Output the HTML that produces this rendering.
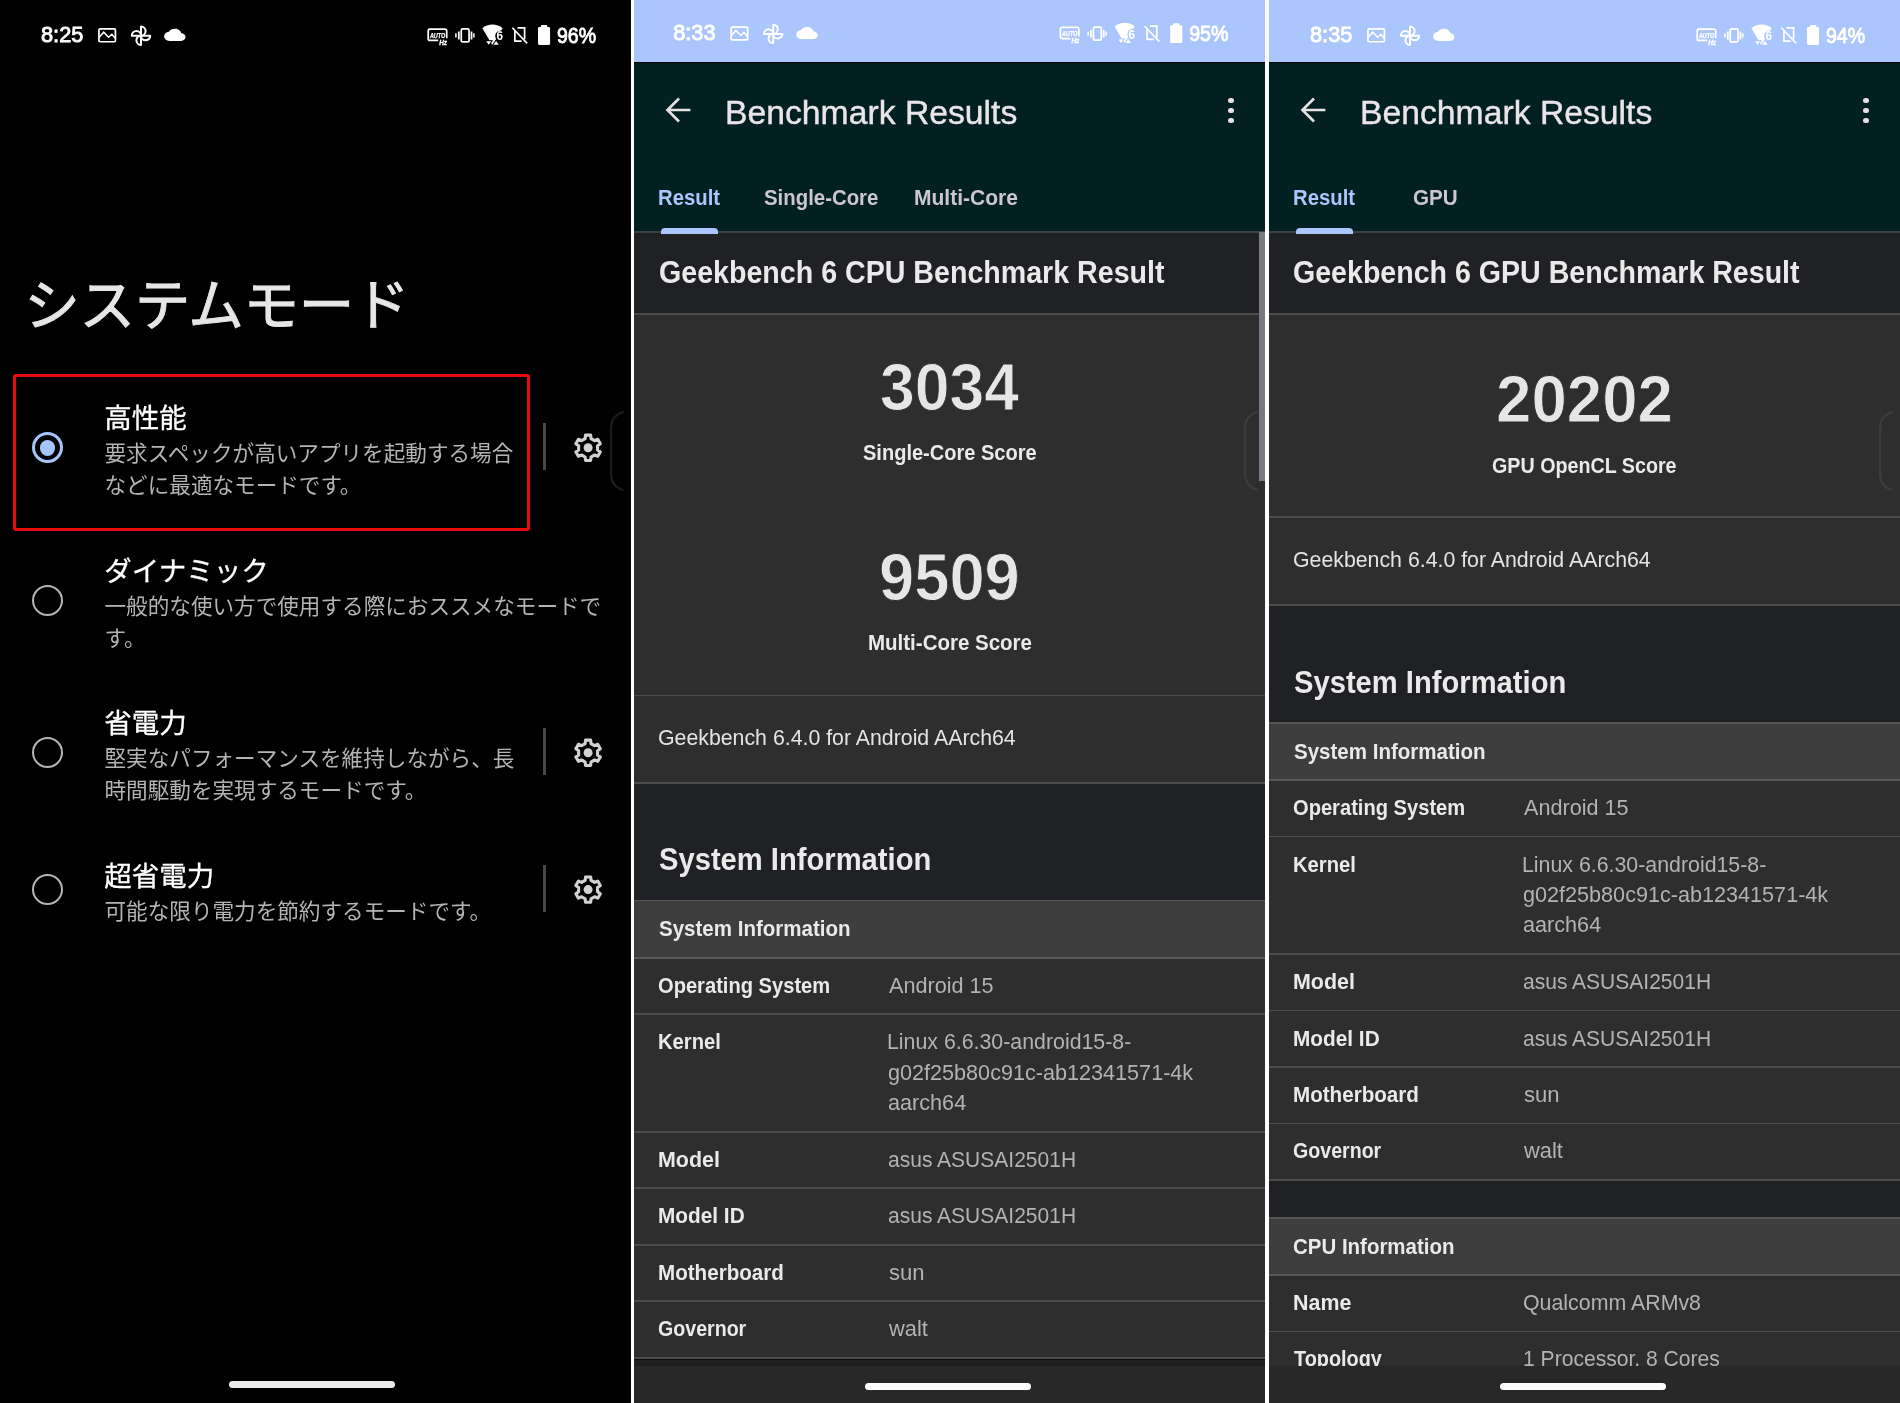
<!DOCTYPE html>
<html lang="ja"><head><meta charset="utf-8"><title>System mode / Geekbench 6</title>
<style>
html,body{margin:0;padding:0;background:#fff}
body{width:1900px;height:1403px;position:relative;overflow:hidden;font-family:"Liberation Sans","Noto Sans CJK JP",sans-serif}
.p{position:absolute;top:0;height:1403px;width:631px;overflow:hidden}
#p1{left:0;background:#000}
#p2{left:634px;background:#202124}
#p3{left:1269px;background:#202124}
.t{position:absolute;white-space:nowrap;line-height:1;transform-origin:0 50%}
.b{position:absolute}
.tl{position:absolute;left:0;top:0;width:631px;overflow:hidden;will-change:transform}
.ic{position:absolute;left:0;top:0;overflow:visible}
.sb{position:absolute;left:0;top:0;width:631px;height:62px}
#p2 .cut,#p3 .cut{fill:#abc6fd}
#p2 .cuts,#p3 .cuts{stroke:#abc6fd}
</style></head>
<body>
<div class="p" id="p1"><div class="b" style="left:12.7px;top:373.7px;width:517.8px;height:157.2px;box-sizing:border-box;border:3.6px solid #e80c0c;border-radius:3px;background:transparent"></div><div class="b" style="left:31.8px;top:431.9px;width:31.6px;height:31.6px;box-sizing:border-box;border:3.7px solid #a5c4f8;border-radius:50%"></div><div class="b" style="left:39.7px;top:439.8px;width:15.8px;height:15.8px;background:#a5c4f8;border-radius:50%"></div><div class="b" style="left:543.1px;top:423.4px;width:2.6px;height:47px;background:#484848;"></div><svg class="ic" width="631" height="1403" viewBox="0 0 631 1403"><path fill="none" stroke="#d2d2d2" stroke-width="3.1" stroke-linejoin="round" d="M585.18 438.55 L585.53 435.16 L590.67 435.16 L591.02 438.55 L594.65 440.65 L597.76 439.25 L600.33 443.71 L597.57 445.70 L597.57 449.90 L600.33 451.89 L597.76 456.35 L594.65 454.95 L591.02 457.05 L590.67 460.44 L585.53 460.44 L585.18 457.05 L581.55 454.95 L578.44 456.35 L575.87 451.89 L578.63 449.90 L578.63 445.70 L575.87 443.71 L578.44 439.25 L581.55 440.65 Z"/><circle cx="588.1" cy="447.8" r="4.5" fill="#d2d2d2"/></svg><div class="b" style="left:31.8px;top:584.6000000000001px;width:31.6px;height:31.6px;box-sizing:border-box;border:2px solid #b4b4b4;border-radius:50%"></div><div class="b" style="left:31.8px;top:736.9000000000001px;width:31.6px;height:31.6px;box-sizing:border-box;border:2px solid #b4b4b4;border-radius:50%"></div><div class="b" style="left:543.1px;top:728.4000000000001px;width:2.6px;height:47px;background:#484848;"></div><svg class="ic" width="631" height="1403" viewBox="0 0 631 1403"><path fill="none" stroke="#d2d2d2" stroke-width="3.1" stroke-linejoin="round" d="M585.18 743.55 L585.53 740.16 L590.67 740.16 L591.02 743.55 L594.65 745.65 L597.76 744.25 L600.33 748.71 L597.57 750.70 L597.57 754.90 L600.33 756.89 L597.76 761.35 L594.65 759.95 L591.02 762.05 L590.67 765.44 L585.53 765.44 L585.18 762.05 L581.55 759.95 L578.44 761.35 L575.87 756.89 L578.63 754.90 L578.63 750.70 L575.87 748.71 L578.44 744.25 L581.55 745.65 Z"/><circle cx="588.1" cy="752.8000000000001" r="4.5" fill="#d2d2d2"/></svg><div class="b" style="left:31.8px;top:873.7px;width:31.6px;height:31.6px;box-sizing:border-box;border:2px solid #b4b4b4;border-radius:50%"></div><div class="b" style="left:543.1px;top:865.2px;width:2.6px;height:47px;background:#484848;"></div><svg class="ic" width="631" height="1403" viewBox="0 0 631 1403"><path fill="none" stroke="#d2d2d2" stroke-width="3.1" stroke-linejoin="round" d="M585.18 880.35 L585.53 876.96 L590.67 876.96 L591.02 880.35 L594.65 882.45 L597.76 881.05 L600.33 885.51 L597.57 887.50 L597.57 891.70 L600.33 893.69 L597.76 898.15 L594.65 896.75 L591.02 898.85 L590.67 902.24 L585.53 902.24 L585.18 898.85 L581.55 896.75 L578.44 898.15 L575.87 893.69 L578.63 891.70 L578.63 887.50 L575.87 885.51 L578.44 881.05 L581.55 882.45 Z"/><circle cx="588.1" cy="889.6" r="4.5" fill="#d2d2d2"/></svg><svg class="ic" width="631" height="1403" viewBox="0 0 631 1403"><path fill="none" stroke="#1b1b1b" stroke-width="2.4" stroke-linecap="round" d="M622.6 412 C 612.7 416.5, 611 421, 611 431 V 471 C 611 481, 612.7 485.5, 622.6 490"/></svg><div class="b" style="left:229px;top:1381px;width:166px;height:7px;border-radius:4px;background:#e9e9e9"></div><div class="tl" style="height:1403px"><div class="sb" style="transform:translate(0px,0px)"><span class="t" style="left:41.35px;top:24.27px;font-size:22.6px;color:#fff;transform:scaleX(0.9638506352943299);-webkit-text-stroke:0.9px #fff;">8:25</span><span class="t" style="left:556.87px;top:24.77px;font-size:22.6px;color:#fff;transform:scaleX(0.8648534515750157);-webkit-text-stroke:0.9px #fff;">96%</span><svg class="ic" width="631" height="62" viewBox="0 0 631 62" fill="none" stroke="#fff" stroke-width="1.7">
<rect x="98.95" y="28.95" width="16.5" height="12.8" rx="1.2"/>
<path d="M99.2 37.3 L103.7 32.2 L108.6 37.2 L111.8 34.3 L115.3 38.2" stroke-width="1.5" stroke-linejoin="miter"/>
<g stroke-width="2" stroke-linejoin="round">
<path d="M141 35.7 V26.5 A4.6 4.6 0 0 1 141 35.7 Z"/>
<path d="M141 35.7 H150.2 A4.6 4.6 0 0 1 141 35.7 Z"/>
<path d="M141 35.7 V44.9 A4.6 4.6 0 0 1 141 35.7 Z"/>
<path d="M141 35.7 H131.8 A4.6 4.6 0 0 1 141 35.7 Z"/>
</g>
<path fill="#fff" stroke="none" transform="translate(164.1 25.65) scale(0.8917 0.7625)" d="M19.35 10.04C18.67 6.59 15.64 4 12 4 9.11 4 6.6 5.64 5.35 8.04 2.34 8.36 0 10.91 0 14c0 3.310 2.69 6 6 6h13c2.76 0 5-2.24 5-5 0-2.64-2.050-4.78-4.65-4.960z"/>
<path d="M438.3 40.45 H430 A1.8 1.8 0 0 1 428.2 38.65 V30.95 A1.8 1.8 0 0 1 430 29.15 H444.9 A1.8 1.8 0 0 1 446.7 30.95 V38.2"/>
<text x="429.9" y="37.7" font-family="Liberation Sans, sans-serif" font-weight="700" font-style="italic" font-size="7.2" fill="#fff" stroke="#fff" stroke-width="0.25" textLength="15.4" lengthAdjust="spacingAndGlyphs">AUTO</text>
<text x="439.2" y="44.8" font-family="Liberation Sans, sans-serif" font-weight="700" font-style="italic" font-size="6.4" fill="#fff" stroke="#fff" stroke-width="0.3" textLength="7.8" lengthAdjust="spacingAndGlyphs">Hz</text>
<rect x="461.25" y="28.85" width="7.8" height="13.1" rx="1.4"/>
<path d="M458.8 31.6 V39.4 M471.5 31.6 V39.4" stroke-width="1.8"/>
<path d="M455.9 33.3 V37.6 M473.9 33.3 V37.6" stroke-width="1.5"/>
<path fill="#fff" stroke="none" d="M492.5 45.6 L482.4 28.3 A 15.6 15.6 0 0 1 502.6 28.3 Z"/>
<circle cx="500.9" cy="36.1" r="5.7" fill="#000" stroke="none" class="cut"/>
<path class="cuts" fill="#fff" stroke="#000" stroke-width="2" paint-order="stroke" stroke-linejoin="miter" d="M486.2 41.2 H491.2 L488.7 44.7 Z M493.4 44.7 H498.8 L496.1 40.9 Z"/>
<text x="496.4" y="40.4" font-family="Liberation Sans, sans-serif" font-weight="700" font-size="12.2" fill="#fff" stroke="none" textLength="6.5" lengthAdjust="spacingAndGlyphs">6</text>
<path d="M517.6 27.9 H524.6 V39.2 M521.6 41.2 H514.9 V31" stroke-width="1.7"/>
<path d="M512.3 27.8 L527.2 43.4" stroke-width="1.6"/>
<path fill="#fff" stroke="none" d="M539.3 27.1 H540.9 V25.9 A0.9 0.9 0 0 1 541.8 25 H546.4 A0.9 0.9 0 0 1 547.3 25.9 V27.1 H548.8 A1.3 1.3 0 0 1 550.1 28.4 V43.6 A1.3 1.3 0 0 1 548.8 44.9 H539.3 A1.3 1.3 0 0 1 538 43.6 V28.4 A1.3 1.3 0 0 1 539.3 27.1 Z"/>
</svg></div><span class="t" style="left:24.30px;top:279.13px;font-size:55.6px;color:#e6e6e6;letter-spacing:-0.35px;-webkit-text-stroke:0.9px #e6e6e6;">システムモード</span><span class="t" style="left:104.30px;top:405.22px;font-size:27.5px;color:#fff;-webkit-text-stroke:0.3px #fff;">高性能</span><span class="t" style="left:104.50px;top:443.07px;font-size:21.6px;color:#b4b4b4;">要求スペックが高いアプリを起動する場合</span><span class="t" style="left:104.50px;top:475.07px;font-size:21.6px;color:#b4b4b4;">などに最適なモードです。</span><span class="t" style="left:104.30px;top:557.92px;font-size:27.5px;color:#fff;-webkit-text-stroke:0.3px #fff;">ダイナミック</span><span class="t" style="left:104.50px;top:595.77px;font-size:21.6px;color:#b4b4b4;">一般的な使い方で使用する際におススメなモードで</span><span class="t" style="left:104.50px;top:627.77px;font-size:21.6px;color:#b4b4b4;">す。</span><span class="t" style="left:104.30px;top:710.22px;font-size:27.5px;color:#fff;-webkit-text-stroke:0.3px #fff;">省電力</span><span class="t" style="left:104.50px;top:748.07px;font-size:21.6px;color:#b4b4b4;">堅実なパフォーマンスを維持しながら、長</span><span class="t" style="left:104.50px;top:780.07px;font-size:21.6px;color:#b4b4b4;">時間駆動を実現するモードです。</span><span class="t" style="left:104.30px;top:862.72px;font-size:27.5px;color:#fff;-webkit-text-stroke:0.3px #fff;">超省電力</span><span class="t" style="left:104.50px;top:900.57px;font-size:21.6px;color:#b4b4b4;">可能な限り電力を節約するモードです。</span></div></div>
<div class="p" id="p2"><div class="b" style="left:0px;top:0px;width:631px;height:62px;background:#abc6fd;"></div><div class="b" style="left:0px;top:62px;width:631px;height:170px;background:#022021;"></div><div class="b" style="left:0px;top:61.8px;width:631px;height:1.1px;background:#00060f;"></div><svg class="ic" style="left:27px;top:92px" width="36" height="36" viewBox="0 0 24 24"><path fill="none" stroke="#e6e1e5" stroke-width="1.75" d="M19.6 12 H4.7 M12 4.3 L4.3 12 L12 19.7"/></svg><div class="b" style="left:594px;top:97.7px;width:5.6px;height:5.6px;border-radius:50%;background:#e6e1e5"></div><div class="b" style="left:594px;top:107.7px;width:5.6px;height:5.6px;border-radius:50%;background:#e6e1e5"></div><div class="b" style="left:594px;top:117.7px;width:5.6px;height:5.6px;border-radius:50%;background:#e6e1e5"></div><div class="b" style="left:0px;top:231px;width:631px;height:2px;background:#3a4244;"></div><div class="b" style="left:27px;top:228px;width:56.5px;height:6px;border-radius:4px 4px 0 0;background:#abc6fd"></div><div class="b" style="left:0px;top:314px;width:631px;height:468.8px;background:#2e2e2e;"></div><div class="b" style="left:0px;top:313.1px;width:631px;height:1.8px;background:#4c4c4c;"></div><svg class="ic" width="631" height="1403" viewBox="0 0 631 1403"><path fill="none" stroke="#3c3c3c" stroke-width="2.4" stroke-linecap="round" d="M622.6 412 C 612.7 416.5, 611 421, 611 431 V 471 C 611 481, 612.7 485.5, 622.6 490"/></svg><div class="b" style="left:0px;top:694.6px;width:631px;height:1.8px;background:#4c4c4c;"></div><div class="b" style="left:0px;top:781.9px;width:631px;height:1.8px;background:#4c4c4c;"></div><div class="b" style="left:0px;top:957.7px;width:631px;height:401px;background:#2e2e2e;"></div><div class="b" style="left:0px;top:900.5px;width:631px;height:57.2px;background:#3e3e3e;"></div><div class="b" style="left:0px;top:899.6px;width:631px;height:1.8px;background:#555;"></div><div class="b" style="left:0px;top:956.8px;width:631px;height:1.8px;background:#585858;"></div><div class="b" style="left:0px;top:1013.4px;width:631px;height:1.8px;background:#4c4c4c;"></div><div class="b" style="left:0px;top:1131.1px;width:631px;height:1.8px;background:#4c4c4c;"></div><div class="b" style="left:0px;top:1187.4px;width:631px;height:1.8px;background:#4c4c4c;"></div><div class="b" style="left:0px;top:1243.9px;width:631px;height:1.8px;background:#4c4c4c;"></div><div class="b" style="left:0px;top:1300.3px;width:631px;height:1.8px;background:#4c4c4c;"></div><div class="b" style="left:0px;top:1356.8px;width:631px;height:1.8px;background:#4c4c4c;"></div><div class="b" style="left:0px;top:1358.6000000000001px;width:631px;height:10px;background:#1f1f22;"></div><div class="b" style="left:0px;top:1358.6000000000001px;width:631px;height:1.2px;background:#0c0c12;"></div><div class="b" style="left:0px;top:1365.7px;width:631px;height:38px;background:#282828;"></div><div class="b" style="left:624.5px;top:232px;width:6.5px;height:249px;background:#7b7980;"></div><div class="b" style="left:231px;top:1383px;width:166px;height:7px;border-radius:4px;background:#fff"></div><div class="tl" style="height:1366.2px"><span class="t" style="left:90.86px;top:95.22px;font-size:34px;color:#e9e5ea;transform:scaleX(0.9915645179016103);-webkit-text-stroke:0.4px #e9e5ea;">Benchmark Results</span><span class="t" style="left:24.03px;top:186.63px;font-size:21.7px;color:#abc6fd;font-weight:700;transform:scaleX(0.9359152633865285);">Result</span><span class="t" style="left:129.68px;top:186.63px;font-size:21.7px;color:#cbc6d2;font-weight:700;transform:scaleX(0.9396430489868617);">Single-Core</span><span class="t" style="left:280.39px;top:186.63px;font-size:21.7px;color:#cbc6d2;font-weight:700;transform:scaleX(0.9688298378061814);">Multi-Core</span><div class="sb" style="transform:translate(-1.8px,-1.8px)"><span class="t" style="left:41.35px;top:24.27px;font-size:22.6px;color:#fff;transform:scaleX(0.9638506352943299);-webkit-text-stroke:0.9px #fff;">8:33</span><span class="t" style="left:556.87px;top:24.77px;font-size:22.6px;color:#fff;transform:scaleX(0.8648534515750157);-webkit-text-stroke:0.9px #fff;">95%</span><svg class="ic" width="631" height="62" viewBox="0 0 631 62" fill="none" stroke="#fff" stroke-width="1.7">
<rect x="98.95" y="28.95" width="16.5" height="12.8" rx="1.2"/>
<path d="M99.2 37.3 L103.7 32.2 L108.6 37.2 L111.8 34.3 L115.3 38.2" stroke-width="1.5" stroke-linejoin="miter"/>
<g stroke-width="2" stroke-linejoin="round">
<path d="M141 35.7 V26.5 A4.6 4.6 0 0 1 141 35.7 Z"/>
<path d="M141 35.7 H150.2 A4.6 4.6 0 0 1 141 35.7 Z"/>
<path d="M141 35.7 V44.9 A4.6 4.6 0 0 1 141 35.7 Z"/>
<path d="M141 35.7 H131.8 A4.6 4.6 0 0 1 141 35.7 Z"/>
</g>
<path fill="#fff" stroke="none" transform="translate(164.1 25.65) scale(0.8917 0.7625)" d="M19.35 10.04C18.67 6.59 15.64 4 12 4 9.11 4 6.6 5.64 5.35 8.04 2.34 8.36 0 10.91 0 14c0 3.310 2.69 6 6 6h13c2.76 0 5-2.24 5-5 0-2.64-2.050-4.78-4.65-4.960z"/>
<path d="M438.3 40.45 H430 A1.8 1.8 0 0 1 428.2 38.65 V30.95 A1.8 1.8 0 0 1 430 29.15 H444.9 A1.8 1.8 0 0 1 446.7 30.95 V38.2"/>
<text x="429.9" y="37.7" font-family="Liberation Sans, sans-serif" font-weight="700" font-style="italic" font-size="7.2" fill="#fff" stroke="#fff" stroke-width="0.25" textLength="15.4" lengthAdjust="spacingAndGlyphs">AUTO</text>
<text x="439.2" y="44.8" font-family="Liberation Sans, sans-serif" font-weight="700" font-style="italic" font-size="6.4" fill="#fff" stroke="#fff" stroke-width="0.3" textLength="7.8" lengthAdjust="spacingAndGlyphs">Hz</text>
<rect x="461.25" y="28.85" width="7.8" height="13.1" rx="1.4"/>
<path d="M458.8 31.6 V39.4 M471.5 31.6 V39.4" stroke-width="1.8"/>
<path d="M455.9 33.3 V37.6 M473.9 33.3 V37.6" stroke-width="1.5"/>
<path fill="#fff" stroke="none" d="M492.5 45.6 L482.4 28.3 A 15.6 15.6 0 0 1 502.6 28.3 Z"/>
<circle cx="500.9" cy="36.1" r="5.7" fill="#000" stroke="none" class="cut"/>
<path class="cuts" fill="#fff" stroke="#000" stroke-width="2" paint-order="stroke" stroke-linejoin="miter" d="M486.2 41.2 H491.2 L488.7 44.7 Z M493.4 44.7 H498.8 L496.1 40.9 Z"/>
<text x="496.4" y="40.4" font-family="Liberation Sans, sans-serif" font-weight="700" font-size="12.2" fill="#fff" stroke="none" textLength="6.5" lengthAdjust="spacingAndGlyphs">6</text>
<path d="M517.6 27.9 H524.6 V39.2 M521.6 41.2 H514.9 V31" stroke-width="1.7"/>
<path d="M512.3 27.8 L527.2 43.4" stroke-width="1.6"/>
<path fill="#fff" stroke="none" d="M539.3 27.1 H540.9 V25.9 A0.9 0.9 0 0 1 541.8 25 H546.4 A0.9 0.9 0 0 1 547.3 25.9 V27.1 H548.8 A1.3 1.3 0 0 1 550.1 28.4 V43.6 A1.3 1.3 0 0 1 548.8 44.9 H539.3 A1.3 1.3 0 0 1 538 43.6 V28.4 A1.3 1.3 0 0 1 539.3 27.1 Z"/>
</svg></div><span class="t" style="left:24.61px;top:257.26px;font-size:31px;color:#eaeaea;font-weight:700;transform:scaleX(0.922744971957275);">Geekbench 6 CPU Benchmark Result</span><span class="t" style="left:245.60px;top:354.70px;font-size:65.8px;color:#e6e6e6;font-weight:700;transform:scaleX(0.9491343530685419);-webkit-text-stroke:0.9px #2e2e2e;">3034</span><span class="t" style="left:229.09px;top:441.10px;font-size:22.8px;color:#eaeaea;font-weight:700;transform:scaleX(0.8788787655857996);">Single-Core Score</span><span class="t" style="left:244.79px;top:544.70px;font-size:65.8px;color:#e6e6e6;font-weight:700;transform:scaleX(0.9620235378714257);-webkit-text-stroke:0.9px #2e2e2e;">9509</span><span class="t" style="left:233.52px;top:631.00px;font-size:22.8px;color:#eaeaea;font-weight:700;transform:scaleX(0.898966117088241);">Multi-Core Score</span><span class="t" style="left:24.20px;top:727.15px;font-size:22.5px;color:#e4e4e4;transform:scaleX(0.9468550812949154);">Geekbench 6.4.0 for Android AArch64</span><span class="t" style="left:24.84px;top:843.96px;font-size:31px;color:#eaeaea;font-weight:700;transform:scaleX(0.9408461137246706);">System Information</span><span class="t" style="left:24.78px;top:918.43px;font-size:21.7px;color:#eaeaea;font-weight:700;transform:scaleX(0.9459161847094508);">System Information</span><span class="t" style="left:24.47px;top:974.73px;font-size:21.7px;color:#eaeaea;font-weight:700;transform:scaleX(0.9275574335800056);">Operating System</span><span class="t" style="left:255.00px;top:974.73px;font-size:21.7px;color:#b3b3b3;transform:scaleX(0.9963337244340025);">Android 15</span><span class="t" style="left:23.84px;top:1031.33px;font-size:21.7px;color:#eaeaea;font-weight:700;transform:scaleX(0.9306814633687576);">Kernel</span><span class="t" style="left:253.33px;top:1031.33px;font-size:21.7px;color:#b3b3b3;transform:scaleX(0.983610982110607);">Linux 6.6.30-android15-8-</span><span class="t" style="left:254.32px;top:1061.73px;font-size:21.7px;color:#b3b3b3;transform:scaleX(0.9963053252187873);">g02f25b80c91c-ab12341571-4k</span><span class="t" style="left:254.32px;top:1092.13px;font-size:21.7px;color:#b3b3b3;transform:scaleX(0.9974055413386698);">aarch64</span><span class="t" style="left:23.76px;top:1149.03px;font-size:21.7px;color:#eaeaea;font-weight:700;transform:scaleX(0.9875786650663272);">Model</span><span class="t" style="left:254.34px;top:1149.03px;font-size:21.7px;color:#b3b3b3;transform:scaleX(0.9691210583971251);">asus ASUSAI2501H</span><span class="t" style="left:23.80px;top:1205.33px;font-size:21.7px;color:#eaeaea;font-weight:700;transform:scaleX(0.959180039790365);">Model ID</span><span class="t" style="left:254.34px;top:1205.33px;font-size:21.7px;color:#b3b3b3;transform:scaleX(0.9691210583971251);">asus ASUSAI2501H</span><span class="t" style="left:23.81px;top:1261.83px;font-size:21.7px;color:#eaeaea;font-weight:700;transform:scaleX(0.9502472596888498);">Motherboard</span><span class="t" style="left:254.66px;top:1261.83px;font-size:21.7px;color:#b3b3b3;transform:scaleX(1.0170674885157784);">sun</span><span class="t" style="left:24.49px;top:1318.23px;font-size:21.7px;color:#eaeaea;font-weight:700;transform:scaleX(0.9039590934915726);">Governor</span><span class="t" style="left:255.34px;top:1318.23px;font-size:21.7px;color:#b3b3b3;transform:scaleX(1.0076203996860202);">walt</span></div></div>
<div class="p" id="p3"><div class="b" style="left:0px;top:0px;width:631px;height:62px;background:#abc6fd;"></div><div class="b" style="left:0px;top:62px;width:631px;height:170px;background:#022021;"></div><div class="b" style="left:0px;top:61.8px;width:631px;height:1.1px;background:#00060f;"></div><svg class="ic" style="left:27px;top:92px" width="36" height="36" viewBox="0 0 24 24"><path fill="none" stroke="#e6e1e5" stroke-width="1.75" d="M19.6 12 H4.7 M12 4.3 L4.3 12 L12 19.7"/></svg><div class="b" style="left:594px;top:97.7px;width:5.6px;height:5.6px;border-radius:50%;background:#e6e1e5"></div><div class="b" style="left:594px;top:107.7px;width:5.6px;height:5.6px;border-radius:50%;background:#e6e1e5"></div><div class="b" style="left:594px;top:117.7px;width:5.6px;height:5.6px;border-radius:50%;background:#e6e1e5"></div><div class="b" style="left:0px;top:231px;width:631px;height:2px;background:#3a4244;"></div><div class="b" style="left:27px;top:228px;width:56.5px;height:6px;border-radius:4px 4px 0 0;background:#abc6fd"></div><div class="b" style="left:0px;top:314px;width:631px;height:290.8px;background:#2e2e2e;"></div><div class="b" style="left:0px;top:313.1px;width:631px;height:1.8px;background:#4c4c4c;"></div><svg class="ic" width="631" height="1403" viewBox="0 0 631 1403"><path fill="none" stroke="#3c3c3c" stroke-width="2.4" stroke-linecap="round" d="M622.6 412 C 612.7 416.5, 611 421, 611 431 V 471 C 611 481, 612.7 485.5, 622.6 490"/></svg><div class="b" style="left:0px;top:515.8px;width:631px;height:1.8px;background:#4c4c4c;"></div><div class="b" style="left:0px;top:603.9px;width:631px;height:1.8px;background:#4c4c4c;"></div><div class="b" style="left:0px;top:779.9000000000001px;width:631px;height:401px;background:#2e2e2e;"></div><div class="b" style="left:0px;top:722.7px;width:631px;height:57.2px;background:#3e3e3e;"></div><div class="b" style="left:0px;top:721.8px;width:631px;height:1.8px;background:#555;"></div><div class="b" style="left:0px;top:779.0px;width:631px;height:1.8px;background:#585858;"></div><div class="b" style="left:0px;top:835.6px;width:631px;height:1.8px;background:#4c4c4c;"></div><div class="b" style="left:0px;top:953.3px;width:631px;height:1.8px;background:#4c4c4c;"></div><div class="b" style="left:0px;top:1009.6px;width:631px;height:1.8px;background:#4c4c4c;"></div><div class="b" style="left:0px;top:1066.1px;width:631px;height:1.8px;background:#4c4c4c;"></div><div class="b" style="left:0px;top:1122.5px;width:631px;height:1.8px;background:#4c4c4c;"></div><div class="b" style="left:0px;top:1179.0px;width:631px;height:1.8px;background:#4c4c4c;"></div><div class="b" style="left:0px;top:1180.65px;width:631px;height:38px;background:#202124;"></div><div class="b" style="left:0px;top:1275.0px;width:631px;height:200px;background:#2e2e2e;"></div><div class="b" style="left:0px;top:1217.8px;width:631px;height:57.2px;background:#3e3e3e;"></div><div class="b" style="left:0px;top:1216.9px;width:631px;height:1.8px;background:#555;"></div><div class="b" style="left:0px;top:1274.1px;width:631px;height:1.8px;background:#585858;"></div><div class="b" style="left:0px;top:1330.5px;width:631px;height:1.8px;background:#4c4c4c;"></div><div class="b" style="left:0px;top:1386.9px;width:631px;height:1.8px;background:#4c4c4c;"></div><div class="b" style="left:0px;top:1366px;width:631px;height:37px;background:#282828;"></div><div class="b" style="left:230.5px;top:1383px;width:166px;height:7px;border-radius:4px;background:#fff"></div><div class="tl" style="height:1366.2px"><span class="t" style="left:90.86px;top:95.22px;font-size:34px;color:#e9e5ea;transform:scaleX(0.9915645179016103);-webkit-text-stroke:0.4px #e9e5ea;">Benchmark Results</span><span class="t" style="left:24.03px;top:186.63px;font-size:21.7px;color:#abc6fd;font-weight:700;transform:scaleX(0.9359152633865285);">Result</span><span class="t" style="left:143.55px;top:186.63px;font-size:21.7px;color:#cbc6d2;font-weight:700;transform:scaleX(0.9523967773225714);">GPU</span><div class="sb" style="transform:translate(0px,0px)"><span class="t" style="left:41.35px;top:24.27px;font-size:22.6px;color:#fff;transform:scaleX(0.9638506352943299);-webkit-text-stroke:0.9px #fff;">8:35</span><span class="t" style="left:556.87px;top:24.77px;font-size:22.6px;color:#fff;transform:scaleX(0.8648534515750157);-webkit-text-stroke:0.9px #fff;">94%</span><svg class="ic" width="631" height="62" viewBox="0 0 631 62" fill="none" stroke="#fff" stroke-width="1.7">
<rect x="98.95" y="28.95" width="16.5" height="12.8" rx="1.2"/>
<path d="M99.2 37.3 L103.7 32.2 L108.6 37.2 L111.8 34.3 L115.3 38.2" stroke-width="1.5" stroke-linejoin="miter"/>
<g stroke-width="2" stroke-linejoin="round">
<path d="M141 35.7 V26.5 A4.6 4.6 0 0 1 141 35.7 Z"/>
<path d="M141 35.7 H150.2 A4.6 4.6 0 0 1 141 35.7 Z"/>
<path d="M141 35.7 V44.9 A4.6 4.6 0 0 1 141 35.7 Z"/>
<path d="M141 35.7 H131.8 A4.6 4.6 0 0 1 141 35.7 Z"/>
</g>
<path fill="#fff" stroke="none" transform="translate(164.1 25.65) scale(0.8917 0.7625)" d="M19.35 10.04C18.67 6.59 15.64 4 12 4 9.11 4 6.6 5.64 5.35 8.04 2.34 8.36 0 10.91 0 14c0 3.310 2.69 6 6 6h13c2.76 0 5-2.24 5-5 0-2.64-2.050-4.78-4.65-4.960z"/>
<path d="M438.3 40.45 H430 A1.8 1.8 0 0 1 428.2 38.65 V30.95 A1.8 1.8 0 0 1 430 29.15 H444.9 A1.8 1.8 0 0 1 446.7 30.95 V38.2"/>
<text x="429.9" y="37.7" font-family="Liberation Sans, sans-serif" font-weight="700" font-style="italic" font-size="7.2" fill="#fff" stroke="#fff" stroke-width="0.25" textLength="15.4" lengthAdjust="spacingAndGlyphs">AUTO</text>
<text x="439.2" y="44.8" font-family="Liberation Sans, sans-serif" font-weight="700" font-style="italic" font-size="6.4" fill="#fff" stroke="#fff" stroke-width="0.3" textLength="7.8" lengthAdjust="spacingAndGlyphs">Hz</text>
<rect x="461.25" y="28.85" width="7.8" height="13.1" rx="1.4"/>
<path d="M458.8 31.6 V39.4 M471.5 31.6 V39.4" stroke-width="1.8"/>
<path d="M455.9 33.3 V37.6 M473.9 33.3 V37.6" stroke-width="1.5"/>
<path fill="#fff" stroke="none" d="M492.5 45.6 L482.4 28.3 A 15.6 15.6 0 0 1 502.6 28.3 Z"/>
<circle cx="500.9" cy="36.1" r="5.7" fill="#000" stroke="none" class="cut"/>
<path class="cuts" fill="#fff" stroke="#000" stroke-width="2" paint-order="stroke" stroke-linejoin="miter" d="M486.2 41.2 H491.2 L488.7 44.7 Z M493.4 44.7 H498.8 L496.1 40.9 Z"/>
<text x="496.4" y="40.4" font-family="Liberation Sans, sans-serif" font-weight="700" font-size="12.2" fill="#fff" stroke="none" textLength="6.5" lengthAdjust="spacingAndGlyphs">6</text>
<path d="M517.6 27.9 H524.6 V39.2 M521.6 41.2 H514.9 V31" stroke-width="1.7"/>
<path d="M512.3 27.8 L527.2 43.4" stroke-width="1.6"/>
<path fill="#fff" stroke="none" d="M539.3 27.1 H540.9 V25.9 A0.9 0.9 0 0 1 541.8 25 H546.4 A0.9 0.9 0 0 1 547.3 25.9 V27.1 H548.8 A1.3 1.3 0 0 1 550.1 28.4 V43.6 A1.3 1.3 0 0 1 548.8 44.9 H539.3 A1.3 1.3 0 0 1 538 43.6 V28.4 A1.3 1.3 0 0 1 539.3 27.1 Z"/>
</svg></div><span class="t" style="left:24.31px;top:257.26px;font-size:31px;color:#eaeaea;font-weight:700;transform:scaleX(0.9216650908877245);">Geekbench 6 GPU Benchmark Result</span><span class="t" style="left:226.58px;top:367.20px;font-size:65.8px;color:#e6e6e6;font-weight:700;transform:scaleX(0.96704047511119);-webkit-text-stroke:0.9px #2e2e2e;">20202</span><span class="t" style="left:222.78px;top:453.50px;font-size:22.8px;color:#eaeaea;font-weight:700;transform:scaleX(0.8636163825895753);">GPU OpenCL Score</span><span class="t" style="left:24.20px;top:548.95px;font-size:22.5px;color:#e4e4e4;transform:scaleX(0.9468550812949154);">Geekbench 6.4.0 for Android AArch64</span><span class="t" style="left:24.84px;top:666.76px;font-size:31px;color:#eaeaea;font-weight:700;transform:scaleX(0.9408461137246706);">System Information</span><span class="t" style="left:24.78px;top:740.63px;font-size:21.7px;color:#eaeaea;font-weight:700;transform:scaleX(0.9459161847094508);">System Information</span><span class="t" style="left:24.47px;top:796.93px;font-size:21.7px;color:#eaeaea;font-weight:700;transform:scaleX(0.9275574335800056);">Operating System</span><span class="t" style="left:255.00px;top:796.93px;font-size:21.7px;color:#b3b3b3;transform:scaleX(0.9963337244340025);">Android 15</span><span class="t" style="left:23.84px;top:853.53px;font-size:21.7px;color:#eaeaea;font-weight:700;transform:scaleX(0.9306814633687576);">Kernel</span><span class="t" style="left:253.33px;top:853.53px;font-size:21.7px;color:#b3b3b3;transform:scaleX(0.983610982110607);">Linux 6.6.30-android15-8-</span><span class="t" style="left:254.32px;top:883.93px;font-size:21.7px;color:#b3b3b3;transform:scaleX(0.9963053252187873);">g02f25b80c91c-ab12341571-4k</span><span class="t" style="left:254.32px;top:914.33px;font-size:21.7px;color:#b3b3b3;transform:scaleX(0.9974055413386698);">aarch64</span><span class="t" style="left:23.76px;top:971.23px;font-size:21.7px;color:#eaeaea;font-weight:700;transform:scaleX(0.9875786650663272);">Model</span><span class="t" style="left:254.34px;top:971.23px;font-size:21.7px;color:#b3b3b3;transform:scaleX(0.9691210583971251);">asus ASUSAI2501H</span><span class="t" style="left:23.80px;top:1027.53px;font-size:21.7px;color:#eaeaea;font-weight:700;transform:scaleX(0.959180039790365);">Model ID</span><span class="t" style="left:254.34px;top:1027.53px;font-size:21.7px;color:#b3b3b3;transform:scaleX(0.9691210583971251);">asus ASUSAI2501H</span><span class="t" style="left:23.81px;top:1084.03px;font-size:21.7px;color:#eaeaea;font-weight:700;transform:scaleX(0.9502472596888498);">Motherboard</span><span class="t" style="left:254.66px;top:1084.03px;font-size:21.7px;color:#b3b3b3;transform:scaleX(1.0170674885157784);">sun</span><span class="t" style="left:24.49px;top:1140.43px;font-size:21.7px;color:#eaeaea;font-weight:700;transform:scaleX(0.9039590934915726);">Governor</span><span class="t" style="left:255.34px;top:1140.43px;font-size:21.7px;color:#b3b3b3;transform:scaleX(1.0076203996860202);">walt</span><span class="t" style="left:24.46px;top:1235.73px;font-size:21.7px;color:#eaeaea;font-weight:700;transform:scaleX(0.9436017658647317);">CPU Information</span><span class="t" style="left:23.76px;top:1292.03px;font-size:21.7px;color:#eaeaea;font-weight:700;transform:scaleX(0.9876551639960635);">Name</span><span class="t" style="left:254.00px;top:1292.03px;font-size:21.7px;color:#b3b3b3;transform:scaleX(0.9845713581123469);">Qualcomm ARMv8</span><span class="t" style="left:25.10px;top:1348.43px;font-size:21.7px;color:#eaeaea;font-weight:700;transform:scaleX(0.9162194208528519);">Topology</span><span class="t" style="left:253.68px;top:1348.43px;font-size:21.7px;color:#b3b3b3;transform:scaleX(0.9721455092675876);">1 Processor, 8 Cores</span></div></div>
</body></html>
